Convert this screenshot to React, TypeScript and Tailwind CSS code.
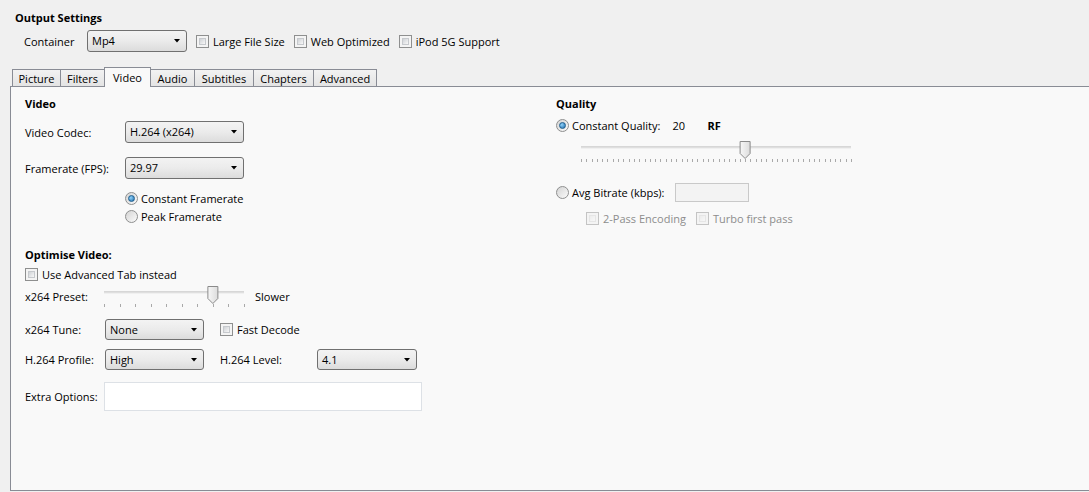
import React from "react"

function Dropdown({ value, w, h = 22 }: { value: string; w: number; h?: number }) {
  return (
    <div
      className="relative flex shrink-0 items-start rounded-[3px] border border-[#707070] bg-linear-to-b from-[#f3f3f3] via-[#ebebeb] to-[#dcdcdc] pl-[4px] pt-[2px] leading-[15px]"
      style={{ width: w, height: h }}
    >
      <span>{value}</span>
      <svg className="absolute right-[6px] top-1/2 -translate-y-1/2" width="6" height="4" viewBox="0 0 6 4">
        <path d="M0 0 H6 L3 3.5 Z" fill="#000" />
      </svg>
    </div>
  )
}

function Checkbox({ label, disabled }: { label: string; disabled?: boolean }) {
  return (
    <div className={"flex items-center gap-[4px] leading-[15px] " + (disabled ? "text-[#8d8d8d]" : "")}>
      <div
        className={
          "size-[13px] shrink-0 border bg-[#f4f4f4] p-[2px] " +
          (disabled ? "border-[#c4c4c4]" : "border-[#8e8f8f]")
        }
      >
        <div
          className={
            "h-full w-full border bg-linear-to-br " +
            (disabled
              ? "border-[#e6e6e6] from-[#ececec] to-[#f8f8f8]"
              : "border-[#c6c9cd] from-[#cfd2d6] to-[#f8f8f8]")
          }
        />
      </div>
      <span>{label}</span>
    </div>
  )
}

function Radio({ label, checked }: { label: string; checked?: boolean }) {
  return (
    <div className="flex items-center gap-[3px] leading-[15px]">
      <div className="flex size-[13px] shrink-0 items-center justify-center rounded-full border border-[#8e8f8f] bg-linear-to-br from-[#d4d4d4] to-[#fbfbfb]">
        {checked && (
          <div className="size-[7px] rounded-full border border-[#1f5f8f] bg-radial-[at_35%_35%] from-[#8fd2fb] to-[#1d6aa8]" />
        )}
      </div>
      <span>{label}</span>
    </div>
  )
}

// horizontal trackbar, drawn
function Slider({ width, ticks, index }: { width: number; ticks: number; index: number }) {
  const step = width / (ticks - 1)
  const x = 6 + index * step
  return (
    <svg width={width + 13} height="22" className="shrink-0">
      <rect x="6" y="5.5" width={width} height="1" fill="#b5b5b5" />
      <rect x="6" y="6.5" width={width} height="1" fill="#e7e7e7" />
      {Array.from({ length: ticks }).map((_, i) => (
        <rect key={i} x={Math.round(6 + i * step)} y="18" width="1" height="3" fill="#a9a9a9" />
      ))}
      <defs>
        <linearGradient id={"thumb" + width} x1="0" x2="1" y1="0" y2="0">
          <stop offset="0" stopColor="#f7f7f7" />
          <stop offset="1" stopColor="#dcdcdc" />
        </linearGradient>
      </defs>
      <path
        d={`M${x - 5} 0.5 H${x + 5} V12.5 L${x} 17.5 L${x - 5} 12.5 Z`}
        fill={"url(#thumb" + width + ")"}
        stroke="#8a8a8a"
      />
    </svg>
  )
}

const tabs = [
  { name: "Picture", w: 48 },
  { name: "Filters", w: 44 },
  { name: "Video", w: 47 },
  { name: "Audio", w: 43 },
  { name: "Subtitles", w: 59 },
  { name: "Chapters", w: 60 },
  { name: "Advanced", w: 64 },
]

export default function App() {
  return (
    <div className="h-[492px] w-[1089px] overflow-hidden bg-[#f0f0f0] pt-[10px] font-['Open_Sans','Noto_Sans',sans-serif] text-[11px] text-black">
      <div className="pl-[15px] font-bold leading-[15px]">Output Settings</div>

      <div className="mt-[5px] flex h-[22px] items-center pl-[24px] leading-[15px]">
        <span className="w-[63px]">Container</span>
        <Dropdown value="Mp4" w={100} />
        <div className="ml-[9px] flex items-center gap-[9px]">
          <Checkbox label="Large File Size" />
          <Checkbox label="Web Optimized" />
          <Checkbox label="iPod 5G Support" />
        </div>
      </div>

      <div className="relative z-10 -mb-px mt-[15px] flex h-[20px] items-end pl-[12px] leading-[15px]">
        {tabs.map((t, i) =>
          t.name === "Video" ? (
            <div
              key={t.name}
              className="flex h-[20px] items-center justify-center border-x border-t border-[#898c95] bg-[#f9f9f9] pb-[1px]"
              style={{ width: t.w }}
            >
              {t.name}
            </div>
          ) : (
            <div
              key={t.name}
              className={
                "mb-px flex h-[17px] items-center justify-center border-t border-[#898c95] bg-linear-to-b from-[#f2f2f2] to-[#e4e4e4] " +
                (i === tabs.length - 1 ? "border-x" : i === 3 ? "" : "border-l")
              }
              style={{ width: t.w }}
            >
              {t.name}
            </div>
          )
        )}
      </div>

      <div className="ml-[10px] flex h-[405px] border-y border-l border-[#898c95] bg-[#f9f9f9] pl-[14px] pt-[9px] leading-[15px]">
        {/* left column */}
        <div className="flex w-[531px] shrink-0 flex-col">
          <div className="font-bold">Video</div>

          <div className="mt-[10px] flex items-center">
            <span className="w-[100px]">Video Codec:</span>
            <Dropdown value="H.264 (x264)" w={119} />
          </div>
          <div className="mt-[14px] flex items-center">
            <span className="w-[100px]">Framerate (FPS):</span>
            <Dropdown value="29.97" w={119} />
          </div>

          <div className="mt-[12px] flex flex-col gap-[3px] pl-[100px]">
            <Radio label="Constant Framerate" checked />
            <Radio label="Peak Framerate" />
          </div>

          <div className="mt-[23px] font-bold">Optimise Video:</div>
          <div className="mt-[5px]">
            <Checkbox label="Use Advanced Tab instead" />
          </div>

          <div className="mt-[4px] flex items-start">
            <span className="mt-[3px] w-[73px]">x264 Preset:</span>
            <Slider width={140} ticks={10} index={7} />
            <span className="ml-[4px] mt-[3px]">Slower</span>
          </div>

          <div className="mt-[11px] flex items-center">
            <span className="w-[80px]">x264 Tune:</span>
            <Dropdown value="None" w={99} h={21} />
            <div className="ml-[16px]">
              <Checkbox label="Fast Decode" />
            </div>
          </div>

          <div className="mt-[9px] flex items-center">
            <span className="w-[80px]">H.264 Profile:</span>
            <Dropdown value="High" w={99} h={21} />
            <span className="ml-[16px] w-[97px]">H.264 Level:</span>
            <Dropdown value="4.1" w={100} h={21} />
          </div>

          <div className="mt-[12px] flex items-center">
            <span className="w-[79px]">Extra Options:</span>
            <div className="h-[29px] w-[318px] border border-[#dde1e6] bg-white" />
          </div>
        </div>

        {/* right column */}
        <div className="flex flex-col">
          <div className="font-bold">Quality</div>
          <div className="mt-[7px] flex items-center">
            <Radio label="Constant Quality:" checked />
            <span className="ml-[12px] w-[35px]">20</span>
            <span className="font-bold">RF</span>
          </div>
          <div className="ml-[19px] mt-[8px]">
            <Slider width={270} ticks={52} index={31} />
          </div>
          <div className="mt-[20px] flex items-center">
            <div className="w-[119px]">
              <Radio label="Avg Bitrate (kbps):" />
            </div>
            <div className="h-[19px] w-[74px] border border-[#c9c9c9] bg-[#f3f3f3]" />
          </div>
          <div className="ml-[30px] mt-[9px] flex items-center gap-[10px]">
            <Checkbox label="2-Pass Encoding" disabled />
            <Checkbox label="Turbo first pass" disabled />
          </div>
        </div>
      </div>
    </div>
  )
}
